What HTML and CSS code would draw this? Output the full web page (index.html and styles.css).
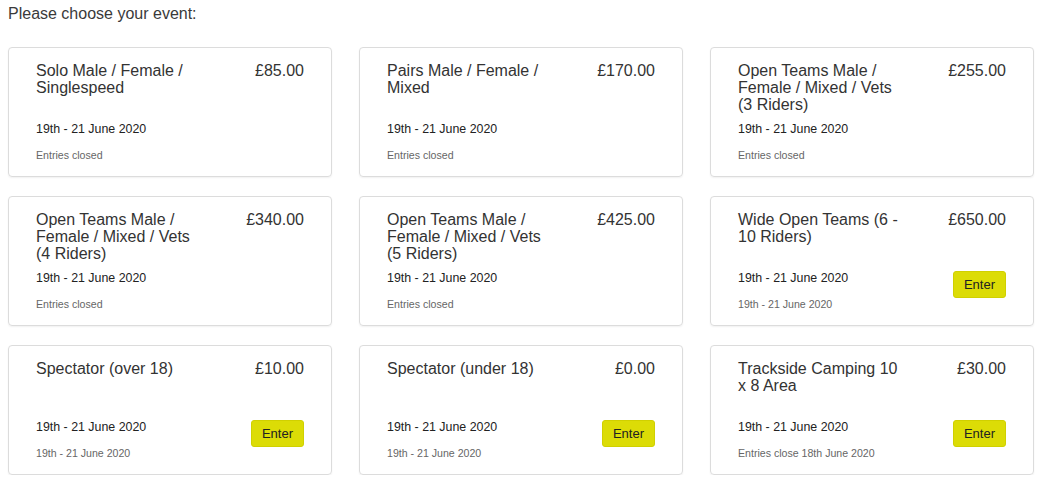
FILE: index.html
```html
<!DOCTYPE html>
<html lang="en">
<head>
<meta charset="utf-8">
<title>Choose your event</title>
<link rel="stylesheet" href="styles.css">
</head>
<body>
<div class="page">
  <p class="intro">Please choose your event:</p>
  <div class="grid">
    <div class="card">
      <div class="top"><div class="title">Solo Male / Female / Singlespeed</div><div class="price">£85.00</div></div>
      <div class="bottom"><div class="info"><div class="date">19th - 21 June 2020</div><div class="note">Entries closed</div></div></div>
    </div>
    <div class="card">
      <div class="top"><div class="title">Pairs Male / Female / Mixed</div><div class="price">£170.00</div></div>
      <div class="bottom"><div class="info"><div class="date">19th - 21 June 2020</div><div class="note">Entries closed</div></div></div>
    </div>
    <div class="card">
      <div class="top"><div class="title">Open Teams Male / Female / Mixed / Vets (3 Riders)</div><div class="price">£255.00</div></div>
      <div class="bottom"><div class="info"><div class="date">19th - 21 June 2020</div><div class="note">Entries closed</div></div></div>
    </div>
    <div class="card">
      <div class="top"><div class="title">Open Teams Male / Female / Mixed / Vets (4 Riders)</div><div class="price">£340.00</div></div>
      <div class="bottom"><div class="info"><div class="date">19th - 21 June 2020</div><div class="note">Entries closed</div></div></div>
    </div>
    <div class="card">
      <div class="top"><div class="title">Open Teams Male / Female / Mixed / Vets (5 Riders)</div><div class="price">£425.00</div></div>
      <div class="bottom"><div class="info"><div class="date">19th - 21 June 2020</div><div class="note">Entries closed</div></div></div>
    </div>
    <div class="card">
      <div class="top"><div class="title">Wide Open Teams (6 - 10 Riders)</div><div class="price">£650.00</div></div>
      <div class="bottom"><div class="info"><div class="date">19th - 21 June 2020</div><div class="note">19th - 21 June 2020</div></div><button class="enter">Enter</button></div>
    </div>
    <div class="card">
      <div class="top"><div class="title">Spectator (over 18)</div><div class="price">£10.00</div></div>
      <div class="bottom"><div class="info"><div class="date">19th - 21 June 2020</div><div class="note">19th - 21 June 2020</div></div><button class="enter">Enter</button></div>
    </div>
    <div class="card">
      <div class="top"><div class="title">Spectator (under 18)</div><div class="price">£0.00</div></div>
      <div class="bottom"><div class="info"><div class="date">19th - 21 June 2020</div><div class="note">19th - 21 June 2020</div></div><button class="enter">Enter</button></div>
    </div>
    <div class="card">
      <div class="top"><div class="title">Trackside Camping 10 x 8 Area</div><div class="price">£30.00</div></div>
      <div class="bottom"><div class="info"><div class="date">19th - 21 June 2020</div><div class="note">Entries close 18th June 2020</div></div><button class="enter">Enter</button></div>
    </div>
  </div>
</div>
</body>
</html>
```

FILE: styles.css
```css
html, body {
  margin: 0;
  padding: 0;
  background: #fff;
}
body {
  font-family: "Liberation Sans", Arial, sans-serif;
  color: #333;
}
.page {
  padding: 0 8px;
}
.intro {
  margin: 5px 0 0;
  font-size: 16px;
  line-height: 18px;
  color: #3a3a3a;
}
.grid {
  margin-top: 24px;
  display: grid;
  grid-template-columns: repeat(3, 324px);
  column-gap: 27px;
  row-gap: 19px;
}
.card {
  box-sizing: border-box;
  height: 130px;
  border: 1px solid #dcdcdc;
  border-radius: 4px;
  box-shadow: 0 1px 2px rgba(0,0,0,0.06);
  padding: 14px 27px 0 27px;
  display: flex;
  flex-direction: column;
}
.top {
  display: flex;
  justify-content: space-between;
  align-items: flex-start;
  height: 60px;
}
.title {
  width: 165px;
  font-size: 16px;
  line-height: 17px;
  color: #333;
}
.price {
  font-size: 16px;
  line-height: 17px;
  color: #333;
}
.bottom {
  display: flex;
  justify-content: space-between;
  align-items: flex-start;
}
.date {
  font-size: 12.4px;
  line-height: 14px;
  color: #222;
}
.note {
  margin-top: 13px;
  font-size: 10.6px;
  line-height: 13px;
  color: #666;
}
.enter {
  margin-top: 0;
  width: 53px;
  height: 27px;
  padding: 0;
  border: 1px solid #d0d000;
  border-radius: 3px;
  background: #dcdc06;
  font-family: "Liberation Sans", Arial, sans-serif;
  font-size: 13px;
  color: #222;
  cursor: pointer;
}
```
